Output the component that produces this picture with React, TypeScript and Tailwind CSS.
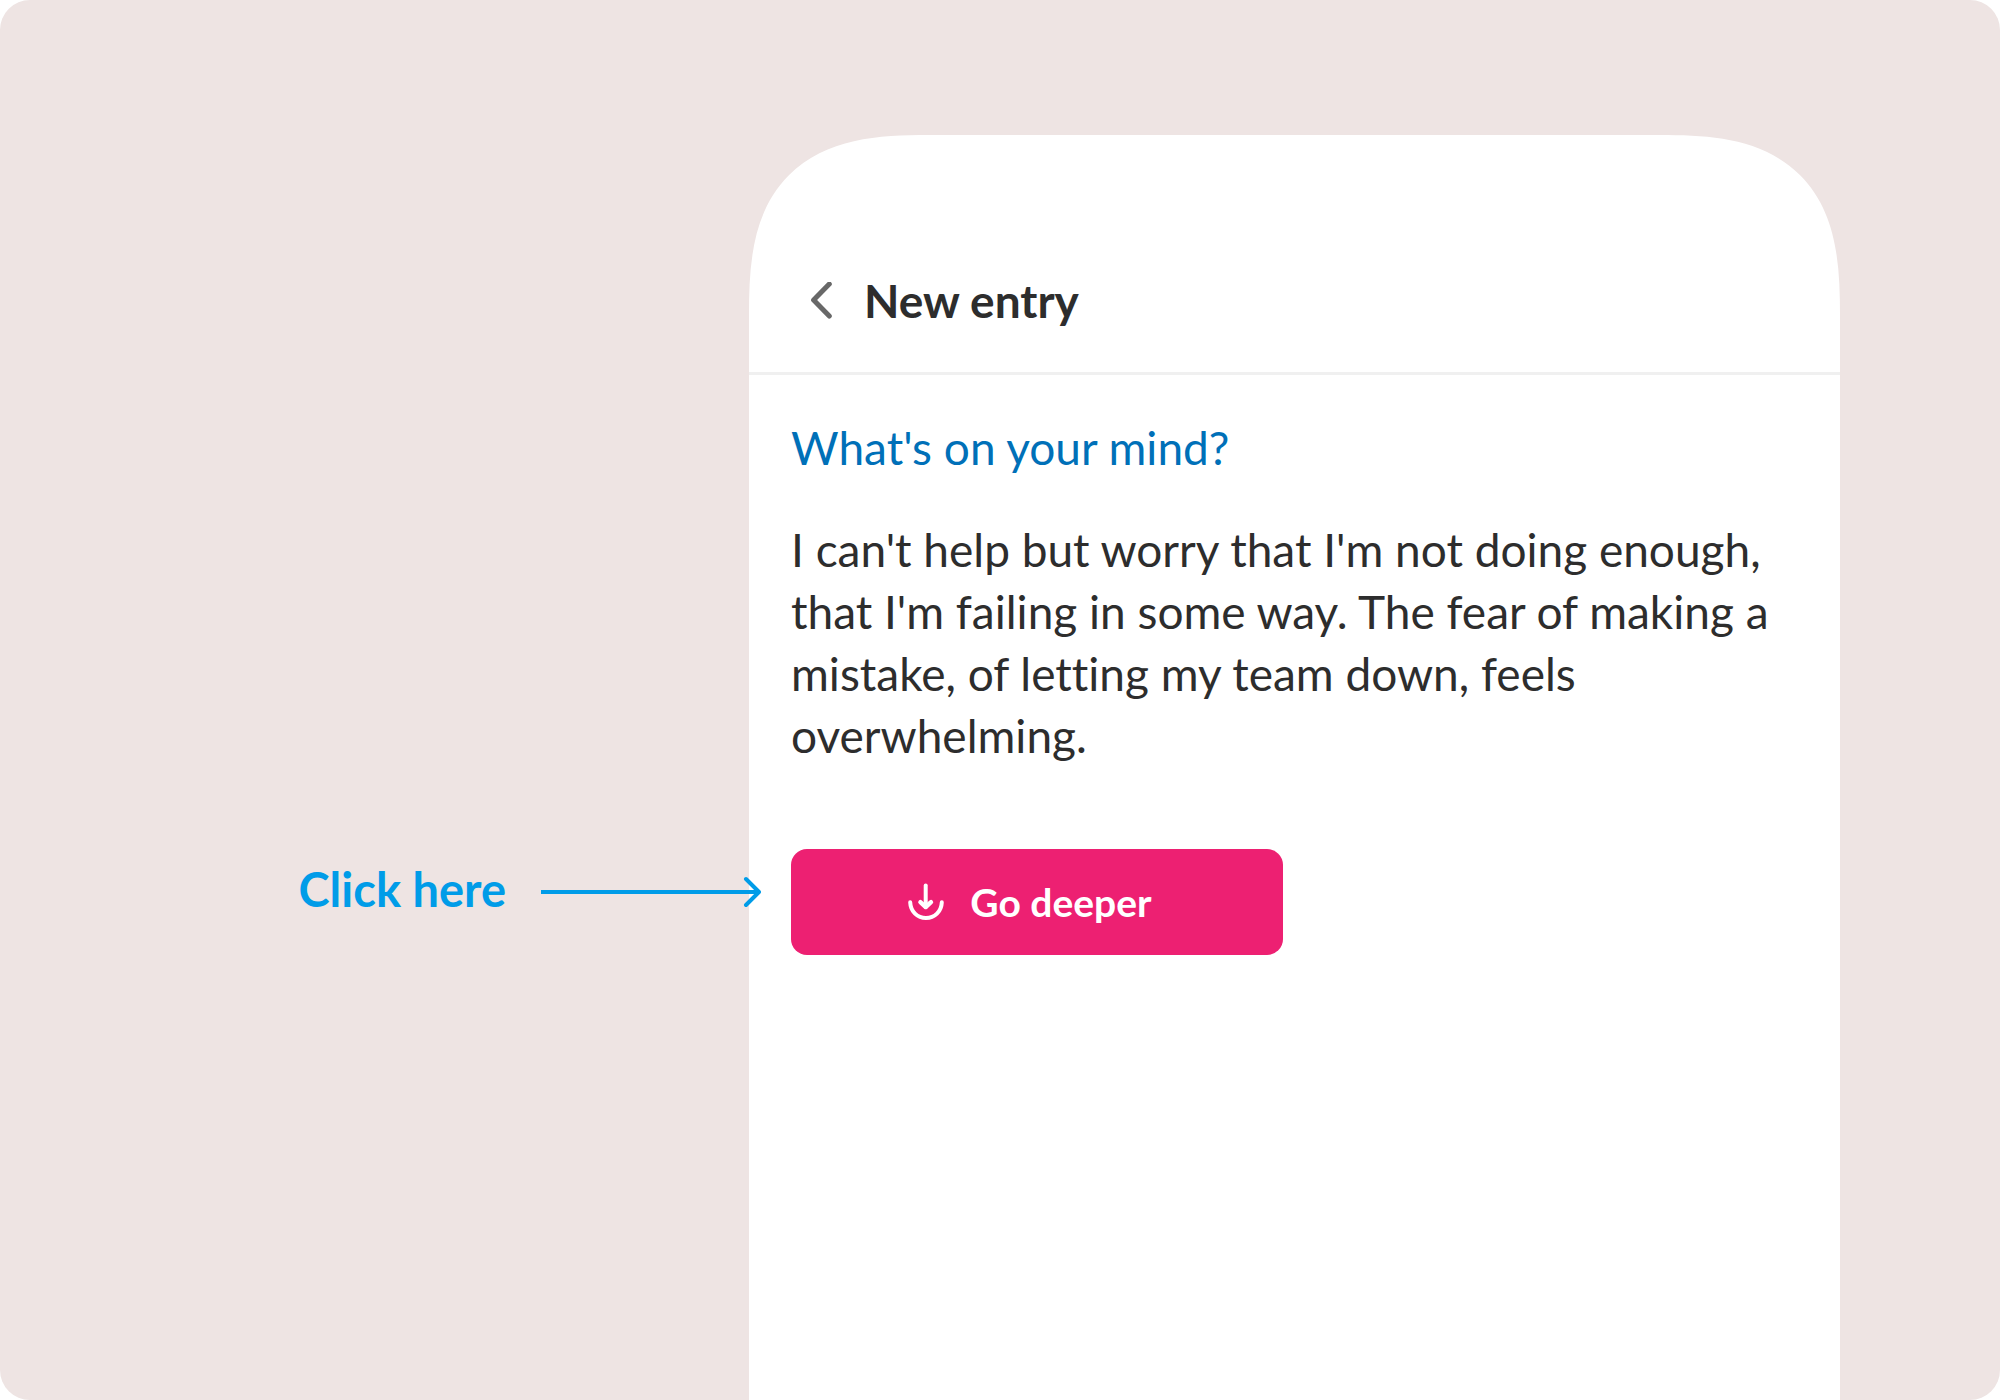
function BackIcon() {
  return (
    <svg
      viewBox="0 0 22 38"
      className="h-[38px] w-[22px]"
      fill="none"
      stroke="currentColor"
      strokeWidth="5"
      strokeLinecap="round"
      strokeLinejoin="round"
      aria-hidden="true"
    >
      <path d="M19.3 2 L3.6 18 L19.3 34" />
    </svg>
  );
}

function DeeperIcon() {
  return (
    <svg
      viewBox="0 0 36 38"
      className="h-[38px] w-9"
      fill="none"
      stroke="currentColor"
      strokeWidth="4"
      strokeLinecap="round"
      strokeLinejoin="round"
      aria-hidden="true"
    >
      <path d="M17.7 2.5 V24" />
      <path d="M12.4 19.2 L17.7 24 L23 19.2" strokeWidth="4.4" />
      <path d="M2.2 19.3 C2.6 28.5 9.4 35 18 35 C26.6 35 33.4 28.5 33.8 19.3" />
    </svg>
  );
}

function CalloutArrow() {
  return (
    <svg
      viewBox="0 0 220 32"
      className="h-8 w-[220px] shrink-0"
      fill="none"
      stroke="currentColor"
      strokeWidth="4"
      aria-hidden="true"
    >
      <path d="M0 16 H217" />
      <path d="M205 3 L218 16 L205 29" strokeLinecap="round" strokeLinejoin="round" />
    </svg>
  );
}

export default function App() {
  return (
    <div className="bg-white">
      <main className="flex min-h-screen overflow-hidden rounded-[30px] bg-[#eee4e3] pt-[135px] pr-[8%] pl-[37.45%] font-['Lato',sans-serif] text-[#2d2d2d] [font-variant-ligatures:none]">
        <section className="min-w-0 flex-1 rounded-t-[137px] bg-white supports-[corner-shape:squircle]:rounded-t-[180px] supports-[corner-shape:squircle]:[corner-shape:superellipse(1.46)]">
          <header className="flex items-end gap-8 border-b-[3px] border-[#f0f0f0] pt-[135px] pb-10 pl-[61px]">
            <button type="button" aria-label="Back" className="flex h-[62px] items-center text-[#686868]">
              <BackIcon />
            </button>
            <h1 className="text-[46px] leading-[62px] font-bold">New entry</h1>
          </header>
          <div className="px-[42px] pt-[42px]">
            <h2 className="text-[46px] leading-[62px] text-[#0070b8]">What's on your mind?</h2>
            <p className="mt-10 text-[46px] leading-[62px]">
              I can't help but worry that I'm not doing enough, that I'm failing in some way. The fear of making a
              mistake, of letting my team down, feels overwhelming.
            </p>
            <div className="relative mt-[82px] w-[492px]">
              <button
                type="button"
                className="flex h-[106px] w-full items-center justify-center gap-[26px] rounded-2xl bg-[#ed2072] pr-[14px] text-[39px] font-bold text-white"
              >
                <DeeperIcon />
                Go deeper
              </button>
              <div className="absolute top-0 right-full mr-[30px] flex h-[86px] items-center gap-[35px] text-[#009ce8]">
                <span className="pb-1.5 text-[47px] font-bold whitespace-nowrap">Click here</span>
                <CalloutArrow />
              </div>
            </div>
          </div>
        </section>
      </main>
    </div>
  );
}
